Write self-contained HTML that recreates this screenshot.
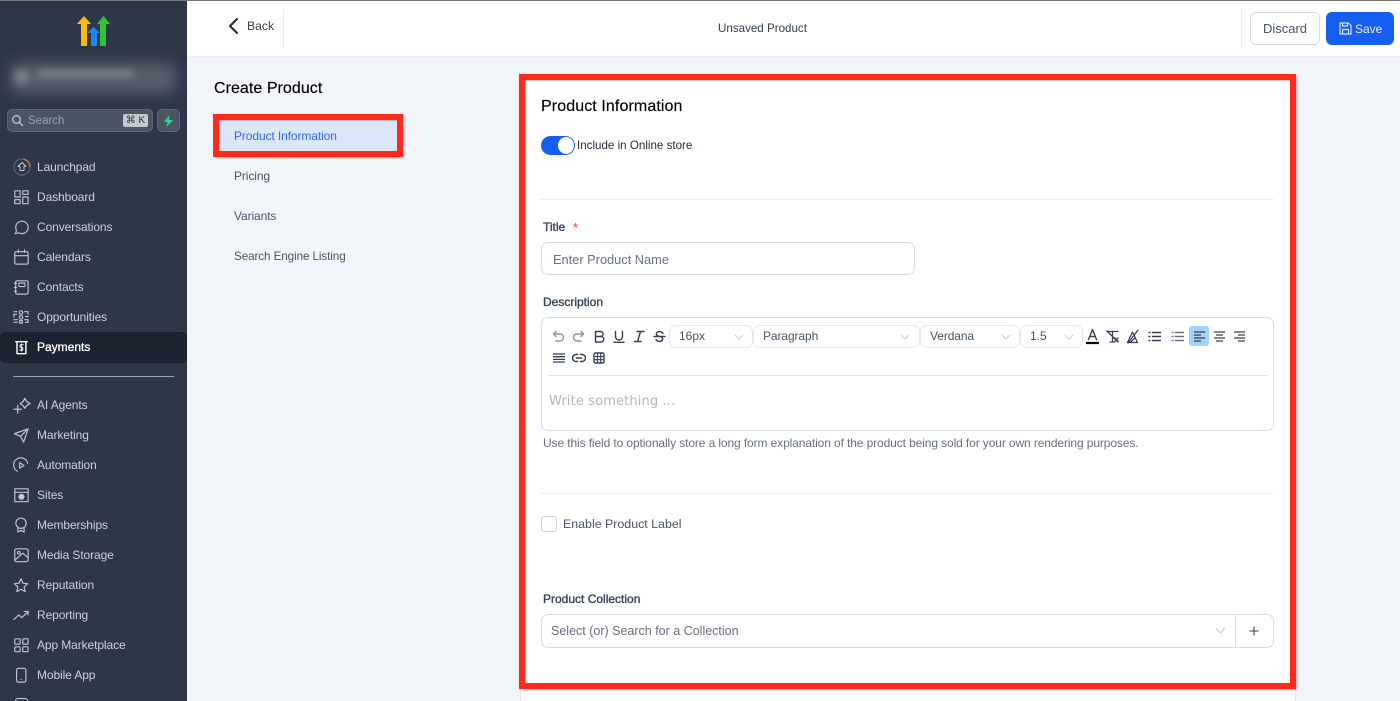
<!DOCTYPE html>
<html lang="en"><head><meta charset="utf-8"><title>Create Product</title>
<style>
*{box-sizing:border-box}
html{margin:0;padding:0;width:1400px;height:701px;overflow:hidden}
body{margin:0;padding:0;width:1400px;height:701px;overflow:hidden;position:relative;background:#f1f5f9;font-family:"Liberation Sans",sans-serif;color:#1f2937}
.a{position:absolute;white-space:nowrap}
#side{position:absolute;left:0;top:0;width:187px;height:701px;background:#2e3748;overflow:hidden}
.n{position:absolute;left:37px;font-size:12px;letter-spacing:-.1px;line-height:16px;color:#ccd1d9;white-space:nowrap}
.i{position:absolute;left:13px;width:16px;height:16px;margin-top:1px;fill:none;stroke:#c0c5ce;stroke-width:1.300;stroke-linecap:round;stroke-linejoin:round}
.t{position:absolute;fill:none;stroke:#344054;stroke-width:1.400;stroke-linecap:round;stroke-linejoin:round}
.sel{position:absolute;top:325px;height:23px;background:#fff;border:1px solid #e4e7ec;border-radius:7px;font-size:12px;letter-spacing:-.1px;line-height:21px;padding-left:9px;color:#475467}
.sel svg{position:absolute;right:8px;top:6px;width:10px;height:10px;fill:none;stroke:#c8ccd3;stroke-width:1}
.lbl{font-size:12px;font-weight:normal;color:#344054;-webkit-text-stroke:.35px #344054}
.nv{font-size:12px;letter-spacing:-.1px;line-height:16px;color:#475467}
</style></head><body>
<div class="a" style="left:0;top:0;width:1400px;height:1px;background:#777;z-index:5"></div>

<div id="side">
<svg class="a" style="left:76px;top:15px" width="35" height="32" viewBox="0 0 35 32">
<path fill="#fbbc05" d="M1 9L8 1 15 9H11V31H5V9Z"/>
<path fill="#2ec52e" d="M21 9L27.500 1 34 9H30V31H24V9Z"/>
<path fill="#1a86f0" d="M11 18L17.500 12 24 18H21V31H15V18Z"/>
</svg>
<div class="a" style="left:10px;top:63px;width:166px;height:30px;background:#565e6b;filter:blur(7px);border-radius:6px"></div>
<div class="a" style="left:15px;top:70px;width:14px;height:14px;background:#7d838e;filter:blur(4px);border-radius:50%"></div>
<div class="a" style="left:38px;top:70px;width:95px;height:7px;background:#7f858f;filter:blur(4px)"></div>

<div class="a" style="left:7px;top:109px;width:146px;height:23px;background:#4a5463;border:1px solid #5d6675;border-radius:5px"></div>
<svg class="a" style="left:11px;top:114px;fill:none;stroke:#c5cad2;stroke-width:1.300" width="13" height="13" viewBox="0 0 13 13"><circle cx="5.500" cy="5.500" r="3.800"/><path d="M8.500 8.500L12 12"/></svg>
<div class="a" style="left:28px;top:114px;font-size:11.5px;line-height:15px;color:#9aa2ae">Search</div>
<div class="a" style="left:123px;top:114px;width:25px;height:13px;background:#c5c9d0;border-radius:2px;font-size:10px;line-height:13px;text-align:center;color:#333b48;font-family:'Liberation Sans','DejaVu Sans',sans-serif">⌘ K</div>
<div class="a" style="left:157px;top:109px;width:23px;height:23px;background:#4a5463;border:1px solid #5d6675;border-radius:5px"></div>
<svg class="a" style="left:163px;top:115px" width="11" height="12" viewBox="0 0 11 12"><path fill="#2ed5a0" d="M6.500 0L1 7H4.500L3.500 12 10 5H6Z"/></svg>

<svg class="i" style="top:158px;width:18px;height:18px;margin-top:0" viewBox="0 0 18 18"><circle cx="9" cy="9" r="8" stroke="#596374"/><path stroke="#e07b39" d="M11 1.300A8 8 0 0 1 17 8"/><path d="M9 4.500L13 8.500H11V12.500H7V8.500H5Z" stroke-width="1"/></svg>
<div class="n" style="top:159px">Launchpad</div>
<svg class="i" style="top:188px" viewBox="0 0 18 18"><rect x="2" y="2" width="6" height="7"/><rect x="11" y="2" width="6" height="4"/><rect x="2" y="12" width="6" height="4.500"/><rect x="11" y="9" width="6" height="7.500"/></svg>
<div class="n" style="top:189px">Dashboard</div>
<svg class="i" style="top:218px" viewBox="0 0 18 18"><path d="M2.500 16.500L4 13A7 7 0 1 1 6.500 15.500Z"/></svg>
<div class="n" style="top:219px">Conversations</div>
<svg class="i" style="top:248px" viewBox="0 0 18 18"><rect x="2" y="3" width="15" height="14" rx="1.500"/><path d="M2 7.500H17M6 1V4M13 1V4"/></svg>
<div class="n" style="top:249px">Calendars</div>
<svg class="i" style="top:278px" viewBox="0 0 18 18"><rect x="3" y="2" width="14" height="15" rx="1.500"/><rect x="6.500" y="4.500" width="7" height="4" rx="1"/><path d="M1.500 5H4M1.500 9.500H4M1.500 14H4"/></svg>
<div class="n" style="top:279px">Contacts</div>
<svg class="i" style="top:308px" viewBox="0 0 18 18" stroke-width="1.500"><circle cx="9" cy="4" r="2"/><circle cx="9" cy="9.500" r="2"/><path d="M7.500 13H10.500V16H7.500ZM1 3H4.500M1 6H4M1 6V9M1 12H5M1 15H5M13 3H17V6M14 8.500H17M13 12H17V15H14"/></svg>
<div class="n" style="top:309px">Opportunities</div>

<div class="a" style="left:0;top:332px;width:187px;height:31px;background:#1b2230;border-radius:5px"></div>
<svg class="i" style="top:338px;stroke:#fff;left:13px" viewBox="0 0 18 18"><path d="M3 3H16M4.500 3V16.500H14.500V3" stroke-width="1.600"/><path d="M11.500 6.500H8V9.500H11V12.500H7.500M9.500 5.500V13.500" stroke-width="1.100"/></svg>
<div class="n" style="top:339px;color:#fff;letter-spacing:0;-webkit-text-stroke:.3px #fff">Payments</div>

<div class="a" style="left:13px;top:376px;width:161px;height:1px;background:#9ea4ae"></div>

<svg class="i" style="top:396px;left:13px;width:18px;height:18px;margin-top:0" viewBox="0 0 19 19"><path d="M12.500 2.500L14.500 6 18 8 14.500 10 12.500 13 10.500 10 7.500 8 10.500 6ZM5 10V18M1 14H9"/></svg>
<div class="n" style="top:397px">AI Agents</div>
<svg class="i" style="top:426px" viewBox="0 0 18 18"><path d="M1.500 7.500L17 2 12 17 8.500 10.500ZM8.500 10.500L17 2"/></svg>
<div class="n" style="top:427px">Marketing</div>
<svg class="i" style="top:456px" viewBox="0 0 18 18"><path d="M5 16A8 8 0 1 1 16.500 7"/><path d="M7.500 6.500L12.500 9.500 7.500 12.500Z"/></svg>
<div class="n" style="top:457px">Automation</div>
<svg class="i" style="top:486px" viewBox="0 0 18 18"><rect x="2" y="2" width="15" height="14.500"/><path d="M2 6H17"/><circle cx="9.500" cy="11" r="2.800" fill="#c9ced6"/></svg>
<div class="n" style="top:487px">Sites</div>
<svg class="i" style="top:516px" viewBox="0 0 18 18"><circle cx="9" cy="7" r="5.800"/><path d="M5.500 12V17L9 15 12.500 17V12"/></svg>
<div class="n" style="top:517px">Memberships</div>
<svg class="i" style="top:546px" viewBox="0 0 18 18"><rect x="2" y="2" width="15" height="14.500" rx="2"/><circle cx="6.500" cy="6.500" r="1.500"/><path d="M2 15L11 7 17 12"/></svg>
<div class="n" style="top:547px">Media Storage</div>
<svg class="i" style="top:576px" viewBox="0 0 18 18"><path d="M9 2L11.200 7 16.500 7.600 12.500 11.200 13.700 16.500 9 13.800 4.300 16.500 5.500 11.200 1.500 7.600 6.800 7Z"/></svg>
<div class="n" style="top:577px">Reputation</div>
<svg class="i" style="top:606px" viewBox="0 0 18 18"><path d="M1 14L6.500 9 10 12 17 5M12.500 5H17V9"/></svg>
<div class="n" style="top:607px">Reporting</div>
<svg class="i" style="top:636px" viewBox="0 0 18 18"><rect x="2" y="2" width="6" height="6" rx="1"/><rect x="11" y="2" width="6" height="6" rx="1"/><rect x="2" y="11" width="6" height="5.500" rx="1"/><rect x="11" y="11" width="6" height="5.500" rx="1"/></svg>
<div class="n" style="top:637px">App Marketplace</div>
<svg class="i" style="top:666px" viewBox="0 0 18 18"><rect x="4" y="1.500" width="10.500" height="15.500" rx="2"/><path d="M9 14H9.300"/></svg>
<div class="n" style="top:667px">Mobile App</div>
<div class="a" style="left:15px;top:698px;width:13px;height:3px;border:1.300px solid #c9ced6;border-bottom:none;border-radius:6px 6px 0 0"></div>
</div>

<!-- Header -->
<div class="a" style="left:187px;top:1px;width:1213px;height:56px;background:#fff;border-bottom:1px solid #e9ecf0"></div>
<svg class="a" style="left:227px;top:17px;fill:none;stroke:#1f2937;stroke-width:2;stroke-linecap:round;stroke-linejoin:round" width="14" height="18" viewBox="0 0 14 18"><path d="M10 2L3 9 10 16"/></svg>
<div class="a" style="left:247px;top:18px;font-size:12.2px;line-height:16px;color:#344054">Back</div>
<div class="a" style="left:283px;top:9px;width:1px;height:39px;background:#e8eaee"></div>
<div class="a" style="left:718px;top:21px;font-size:11.6px;line-height:16px;color:#344054">Unsaved Product</div>
<div class="a" style="left:1241px;top:9px;width:1px;height:39px;background:#e8eaee"></div>
<div class="a" style="left:1250px;top:12px;width:70px;height:33px;background:#fff;border:1px solid #d5d9e0;border-radius:6px;font-size:13px;line-height:31px;text-align:center;color:#475467">Discard</div>
<div class="a" style="left:1326px;top:12px;width:68px;height:33px;background:#155eef;border-radius:6px"></div>
<svg class="a" style="left:1339px;top:22px;fill:none;stroke:#d7e4ff;stroke-width:1.200;stroke-linejoin:round" width="13" height="13" viewBox="0 0 13 13"><path d="M1 1H9.500L12 3.500V12H1Z"/><path d="M3.500 1V4H8.500V1M3.500 12V7.500H9.500V12"/></svg>
<div class="a" style="left:1355px;top:21px;font-size:12px;line-height:16px;color:#e6eeff">Save</div>

<!-- Left nav -->
<div class="a" style="left:214px;top:79px;font-size:16px;line-height:20px;color:#000;letter-spacing:.05px;-webkit-text-stroke:.15px #000">Create Product</div>
<div class="a" style="left:213px;top:114px;width:190px;height:43px;background:#dbe6fa;border:6px solid #ff2a1a;box-shadow:1px 1px 2px rgba(0,0,0,.3),inset 1px 1px 1px rgba(0,0,0,.25)"></div>
<div class="a nv" style="left:234px;top:128px;color:#2f6bea">Product Information</div>
<div class="a nv" style="left:234px;top:168px">Pricing</div>
<div class="a nv" style="left:234px;top:208px">Variants</div>
<div class="a nv" style="left:234px;top:249px;font-size:11.7px">Search Engine Listing</div>

<!-- Card -->
<div class="a" style="left:520px;top:680px;width:776px;height:21px;background:#fff;border:1px solid #e4e7ec;border-bottom:none"></div>
<div class="a" style="left:519px;top:74px;width:777px;height:615px;background:#fff;border:6px solid #ff2a1a;box-shadow:1px 1px 2px rgba(0,0,0,.3),inset 1px 1px 1px rgba(0,0,0,.25)"></div>

<div class="a" style="left:541px;top:97px;font-size:16px;line-height:19px;color:#000;letter-spacing:.1px;-webkit-text-stroke:.15px #000">Product Information</div>
<div class="a" style="left:541px;top:136px;width:34px;height:19px;background:#155eef;border-radius:10px"></div>
<div class="a" style="left:558px;top:137px;width:16px;height:17px;background:#fff;border-radius:50%"></div>
<div class="a" style="left:577px;top:138px;font-size:11.6px;line-height:16px;color:#1f2937">Include in Online store</div>
<div class="a" style="left:541px;top:199px;width:733px;height:1px;background:#eceef2"></div>

<div class="a lbl" style="left:543px;top:220px;line-height:15px">Title</div>
<div class="a" style="left:573px;top:220px;font-size:13px;line-height:15px;color:#f03a2e">*</div>
<div class="a" style="left:541px;top:242px;width:374px;height:33px;background:#fff;border:1px solid #d8dce3;border-radius:7px;font-size:12.8px;line-height:33px;padding-left:11px;color:#667085">Enter Product Name</div>

<div class="a lbl" style="left:543px;top:295px;line-height:15px">Description</div>
<div class="a" style="left:541px;top:317px;width:733px;height:114px;background:#fff;border:1px solid #d8dce3;border-radius:7px"></div>

<svg class="t" style="left:552px;top:330px" width="13" height="13" viewBox="0 0 13 13"><path stroke="#8d95a3" d="M4 1.500L1.500 4 4 6.500M1.500 4H8A3.500 3.500 0 0 1 8 11H4"/></svg>
<svg class="t" style="left:572px;top:330px" width="13" height="13" viewBox="0 0 13 13"><path stroke="#8d95a3" d="M9 1.500L11.500 4 9 6.500M11.500 4H5A3.500 3.500 0 0 0 5 11H9"/></svg>
<svg class="t" style="left:593px;top:330px" width="12" height="13" viewBox="0 0 12 13"><path d="M2.500 1.500H7.500A2.500 2.500 0 0 1 7.500 6.500H2.500ZM2.500 6.500H8A2.700 2.700 0 0 1 8 12H2.500Z"/></svg>
<svg class="t" style="left:613px;top:330px" width="12" height="13" viewBox="0 0 12 13"><path d="M2.500 1.500V6.500A3.500 3.500 0 0 0 9.500 6.500V1.500M1 12.300H11"/></svg>
<svg class="t" style="left:633px;top:330px" width="12" height="13" viewBox="0 0 12 13"><path d="M4 1.500H11M1.500 11.500H8M7.500 1.500L4.500 11.500"/></svg>
<svg class="t" style="left:653px;top:330px" width="13" height="13" viewBox="0 0 13 13"><path d="M1 6.500H12M10 3.500C9 1 3.500 1 3.300 3.800 3.300 5 4.500 6 6.500 6.500 9 7 10 8 9.700 9.500 9 12 4 12 3 9.500"/></svg>

<div class="sel" style="left:669px;width:84px;letter-spacing:0">16px<svg viewBox="0 0 10 10"><path d="M1 3L5 7 9 3"/></svg></div>
<div class="sel" style="left:753px;width:167px">Paragraph<svg style="right:9px" viewBox="0 0 10 10"><path d="M1 3L5 7 9 3"/></svg></div>
<div class="sel" style="left:920px;width:100px">Verdana<svg viewBox="0 0 10 10"><path d="M1 3L5 7 9 3"/></svg></div>
<div class="sel" style="left:1020px;width:63px;letter-spacing:0">1.5<svg viewBox="0 0 10 10"><path d="M1 3L5 7 9 3"/></svg></div>

<svg class="t" style="left:1085px;top:328px" width="15" height="17" viewBox="0 0 15 17"><path d="M3.500 11.500L7.500 1.500 11.500 11.500M5 8.500H10"/><path d="M1 15H14" stroke="#000" stroke-width="2.200" stroke-linecap="butt"/></svg>
<svg class="t" style="left:1106px;top:330px" width="13" height="13" viewBox="0 0 13 13"><path d="M1 1.500H12M6.500 1.500V12M1 1L12 12M4 12H9M9 8L12 11M12 8L9 11" stroke-width="1.300"/></svg>
<svg class="t" style="left:1126px;top:329px" width="13" height="15" viewBox="0 0 13 15"><path d="M1.500 13.500H11.500L6.500 3ZM2 14L12 1M4 13.500L9 9" stroke-width="1.200"/></svg>
<svg class="t" style="left:1148px;top:331px" width="13" height="11" viewBox="0 0 13 11"><path d="M1 1.500H1.800M1 5.500H1.800M1 9.500H1.800M4.500 1.500H12.500M4.500 5.500H12.500M4.500 9.500H12.500" stroke-width="1.500"/></svg>
<svg class="t" style="left:1171px;top:331px" width="13" height="11" viewBox="0 0 13 11"><path d="M1 1.500H2.500M1 5.500H2.500M1 9.500H2.500" stroke="#8d95a3"/><path d="M4.500 1.500H12.500M4.500 5.500H12.500M4.500 9.500H12.500" stroke="#667085"/></svg>
<div class="a" style="left:1189px;top:326px;width:20px;height:20px;background:#a3d2fb;border-radius:3px"></div>
<svg class="t" style="left:1193px;top:331px" width="13" height="11" viewBox="0 0 13 11"><path d="M1 1H12M1 4H8M1 7H12M1 10H8" stroke-linecap="butt" stroke-width="1.300"/></svg>
<svg class="t" style="left:1213px;top:331px" width="13" height="11" viewBox="0 0 13 11"><path d="M1 1H12M3 4H10M1 7H12M3 10H10" stroke-linecap="butt" stroke-width="1.300"/></svg>
<svg class="t" style="left:1233px;top:331px" width="13" height="11" viewBox="0 0 13 11"><path d="M1 1H12M5 4H12M1 7H12M5 10H12" stroke-linecap="butt" stroke-width="1.300"/></svg>

<svg class="t" style="left:553px;top:353px" width="12" height="10" viewBox="0 0 12 10"><path d="M0 1H12M0 3.700H12M0 6.400H12M0 9H12" stroke-linecap="butt" stroke-width="1.300"/></svg>
<svg class="t" style="left:572px;top:353px" width="14" height="10" viewBox="0 0 14 10"><path d="M5.500 1.500H4A3.500 3.500 0 0 0 4 8.500H5.500M8.500 1.500H10A3.500 3.500 0 0 1 10 8.500H8.500M4.500 5H9.500"/></svg>
<svg class="t" style="left:593px;top:352px" width="12" height="12" viewBox="0 0 12 12"><rect x="1" y="1" width="10" height="10" rx="1.500"/><path d="M1 4.500H11M1 7.700H11M4.500 1V11M7.700 1V11" stroke-width="1.100"/></svg>

<div class="a" style="left:548px;top:375px;width:719px;height:1px;background:#dfe2e8"></div>
<div class="a" style="left:549px;top:393px;line-height:18px;color:#b0b5be;letter-spacing:.13px;font-family:'DejaVu Sans','Liberation Sans',sans-serif;font-size:13px">Write something ...</div>
<div class="a" style="left:543px;top:436px;font-size:12px;line-height:15px;color:#667085;letter-spacing:-.11px">Use this field to optionally store a long form explanation of the product being sold for your own rendering purposes.</div>

<div class="a" style="left:541px;top:493px;width:733px;height:1px;background:#eceef2"></div>
<div class="a" style="left:541px;top:516px;width:16px;height:16px;background:#fff;border:1px solid #cfd4dc;border-radius:3px"></div>
<div class="a" style="left:563px;top:516px;font-size:12.4px;line-height:16px;color:#475467">Enable Product Label</div>

<div class="a lbl" style="left:543px;top:592px;line-height:15px">Product Collection</div>
<div class="a" style="left:541px;top:614px;width:733px;height:34px;background:#fff;border:1px solid #d8dce3;border-radius:7px;font-size:12.5px;line-height:32px;padding-left:9px;color:#667085">Select (or) Search for a Collection</div>
<svg class="a" style="left:1215px;top:626px;fill:none;stroke:#c3c8d0;stroke-width:1" width="11" height="10" viewBox="0 0 11 10"><path d="M1 2L5.500 7 10 2"/></svg>
<div class="a" style="left:1235px;top:615px;width:1px;height:32px;background:#d8dce3"></div>
<svg class="a" style="left:1249px;top:626px;fill:none;stroke:#344054;stroke-width:1.100" width="10" height="10" viewBox="0 0 10 10"><path d="M5 .5V9.500M.5 5H9.500"/></svg>
</body></html>
